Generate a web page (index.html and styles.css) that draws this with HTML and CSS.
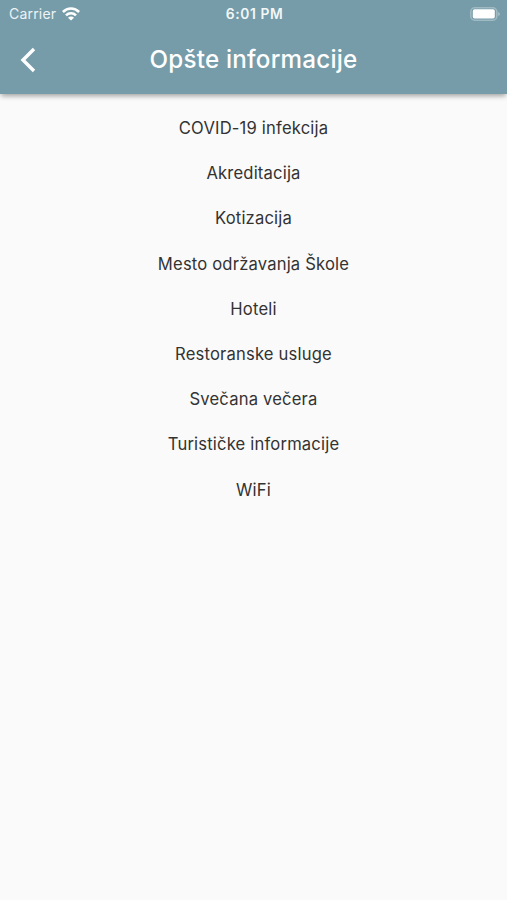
FILE: index.html
```html
<!DOCTYPE html>
<html lang="sr">
<head>
  <meta charset="UTF-8" />
  <meta name="viewport" content="width=device-width, initial-scale=1.0"/>
  <title>Opšte informacije</title>
  <link rel="stylesheet" href="styles.css">
</head>
<body>

<!-- Header -->
<header class="app-bar">
  <div class="status-bar">
    <div class="carrier">
      <span>Carrier</span>
      <svg class="wifi" viewBox="0 0 18 14" fill="none" stroke="#fff" stroke-width="2.6">
        <path d="M.9 5C5.4.4 12.6.4 17.1 5"/>
        <path d="M4 8.4C6.8 5.6 11.2 5.6 14 8.4"/>
        <path d="M9 13.6L6 10.7C7.6 9.2 10.4 9.2 12 10.7Z" fill="#fff" stroke="none"/>
      </svg>
    </div>
    <span class="time">6:01 PM</span>
    <svg class="battery" viewBox="0 0 30 14">
      <rect x="0.8" y="0.8" width="26" height="12.4" rx="4" fill="none" stroke="#fff" stroke-opacity="0.3" stroke-width="1.6"/>
      <rect x="2.8" y="2.3" width="22" height="9.2" rx="1.8" fill="#fff"/>
      <path d="M28.4 5C30 5.7 30 8.3 28.4 9Z" fill="#fff" fill-opacity="0.5"/>
    </svg>
  </div>
  <div class="toolbar">
    <svg class="back" viewBox="0 0 16 26" fill="none" stroke="#fff" stroke-width="3.4">
      <path d="M14 2L3 13L14 24"/>
    </svg>
    <h1>Opšte informacije</h1>
  </div>
</header>

<!-- Menu -->
<ul class="menu">
  <li>COVID-19 infekcija</li>
  <li>Akreditacija</li>
  <li>Kotizacija</li>
  <li>Mesto održavanja Škole</li>
  <li>Hoteli</li>
  <li>Restoranske usluge</li>
  <li>Svečana večera</li>
  <li>Turističke informacije</li>
  <li>WiFi</li>
</ul>

</body>
</html>
```
FILE: styles.css
```css
* { margin: 0; padding: 0; box-sizing: border-box; }

body {
  min-height: 100vh;
  font-family: Inter, sans-serif;
  background: #fafafa;
  color: #333;
}

.app-bar {
  height: 94px;
  background: #769ca9;
  color: #fff;
  box-shadow: 0 3px 5px -1px rgba(0, 0, 0, 0.36);
}

.status-bar {
  display: grid;
  grid-template-columns: 1fr auto 1fr;
  align-items: center;
  height: 27px;
  padding: 0 7px 0 9px;
  font-size: 14px;
}

.carrier {
  display: flex;
  align-items: center;
  gap: 6px;
  letter-spacing: 0.2px;
  color: #edf3f5;
}

.wifi { width: 18px; height: 14px; }

.time {
  font-weight: 600;
  font-size: 13.8px;
  letter-spacing: 0.6px;
  color: #f2f7f8;
}

.battery {
  width: 30px;
  height: 14px;
  justify-self: end;
}

.toolbar {
  display: grid;
  grid-template-columns: 60px 1fr 60px;
  align-items: center;
  height: 65px;
}

.back {
  width: 16px;
  height: 26px;
  margin-left: 20px;
}

h1 {
  font-size: 24.2px;
  font-weight: 500;
  letter-spacing: 0.22px;
  text-align: center;
}

.menu {
  list-style: none;
  padding-top: 12px;
}

.menu li {
  height: 45.2px;
  line-height: 45.2px;
  font-size: 16.6px;
  letter-spacing: 0.18px;
  text-align: center;
}
```
